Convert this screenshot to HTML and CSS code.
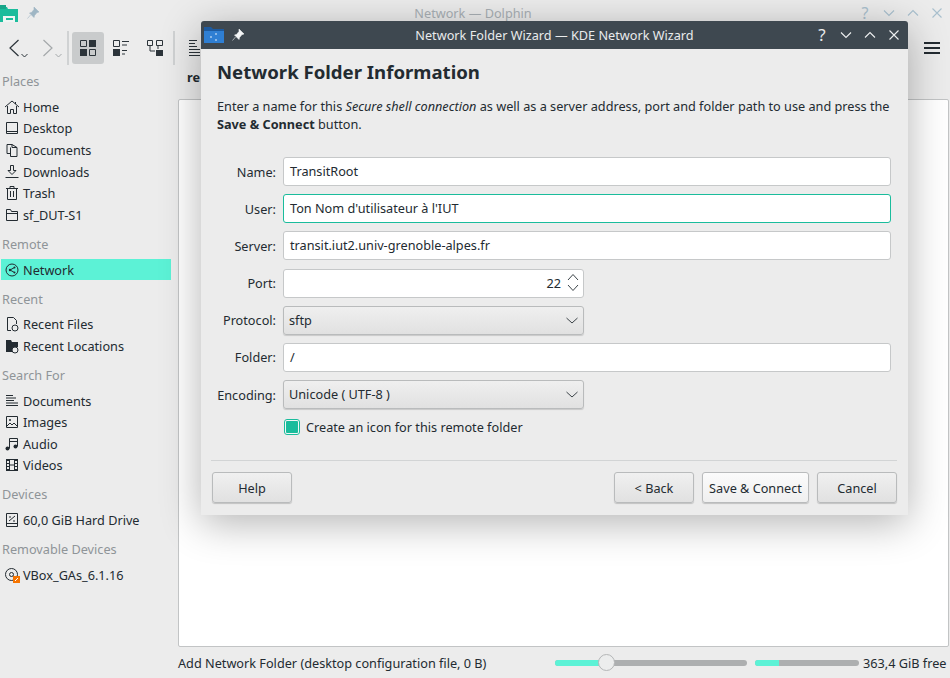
FILE: index.html
```html
<!DOCTYPE html>
<html lang="en">
<head>
<meta charset="utf-8">
<title>Network — Dolphin</title>
<link rel="stylesheet" href="styles.css">
</head>
<body>
<div class="desk">
  <div class="main">
    <header class="titlebar">
      <span class="app-logo"><svg width="18" height="17" viewBox="0 0 18 17"><path d="M0 2h7l1 2h10v13H0z" fill="#1abc9c"/><path d="M0 0h6v4H0z" fill="#17a589"/><path d="M3 11h12v6H3z" fill="#eef5f3"/><path d="M6 13h7v2H6z" fill="#1abc9c"/></svg></span>
      <svg class="pin-faded" width="12" height="12" viewBox="0 0 12 12"><path d="M7 0l5 5-2 .5-2.500 3-.5 2L2.500 6l2-.5 2.500-3zM3.500 8L.5 11.500" fill="#9fb6c4" stroke="#9fb6c4" stroke-width=".6"/></svg>
      <span class="main-title">Network — Dolphin</span>
      <span class="win-btns">
        <span class="faded-q">?</span>
        <svg width="12" height="12" viewBox="0 0 12 12"><path d="M1 3.500l5 5 5-5" class="wb"/></svg>
        <svg width="12" height="12" viewBox="0 0 12 12"><path d="M1 8.500l5-5 5 5" class="wb"/></svg>
        <svg width="12" height="12" viewBox="0 0 12 12"><path d="M1.500 1.500l9 9m0-9l-9 9" class="wb"/></svg>
      </span>
    </header>
    <div class="toolbar">
      <span class="nav"><svg width="10" height="18" viewBox="0 0 10 18"><path d="M9.500 1L1 9l8.500 8" fill="none" stroke="#2c343a" stroke-width="1.200"/></svg><svg class="mini" width="7" height="5" viewBox="0 0 7 5"><path d="M.5 1l3 3 3-3" fill="none" stroke="#2c343a"/></svg></span>
      <span class="nav nav-off"><svg width="10" height="18" viewBox="0 0 10 18"><path d="M.5 1L9 9l-8.500 8" fill="none" stroke="#a4a8aa" stroke-width="1.200"/></svg><svg class="mini" width="7" height="5" viewBox="0 0 7 5"><path d="M.5 1l3 3 3-3" fill="none" stroke="#a4a8aa"/></svg></span>
      <span class="tsep sep-a"></span>
      <span class="tbtn active"><svg width="16" height="16" viewBox="0 0 16 16"><path d="M.5.5h6v6h-6z" fill="none" stroke="#2c343a"/><path d="M9 0h7v7H9zM0 9h7v7H0z" fill="#2c343a"/><path d="M9.500 9.500h6v6h-6z" fill="none" stroke="#2c343a"/></svg></span>
      <span class="tbtn"><svg width="16" height="16" viewBox="0 0 16 16"><path d="M.5.5h6v6h-6zM9 1.500h7M9 5h5M9 10.500h5M9 14h3" fill="none" stroke="#2c343a"/><path d="M0 9h7v7H0z" fill="#2c343a"/></svg></span>
      <span class="tbtn"><svg width="16" height="16" viewBox="0 0 16 16"><path d="M.5.500h5v5h-5zM9.500.500h6v5h-6zM3 6v5h5M11 6v3" fill="none" stroke="#2c343a"/><path d="M9 10h7v6H9z" fill="#2c343a"/></svg></span>
      <span class="tsep sep-b"></span>
      <span class="tbtn-narrow"><svg width="12" height="16" viewBox="0 0 12 16"><path d="M0 .500h8M0 3.500h6M0 6.500h8M0 9.500h11M0 12.500h11M0 15.500h11" stroke="#2c343a" fill="none"/></svg></span>
      <span class="spacer"></span>
      <span class="burger"><i></i><i></i><i></i></span>
    </div>
    <div class="body">
      <aside class="side">
        <h4 class="first">Places</h4>
        <ul>
          <li><svg viewBox="0 0 16 16"><path d="M1 8l7-6 7 6M3.500 7v7.500h3v-4h3v4h3V7M11.500 3v2" class="ic"/></svg>Home</li>
          <li><svg viewBox="0 0 16 16"><path d="M2.500 2.500h11v11h-11zM2.500 11.500h11" class="ic"/></svg>Desktop</li>
          <li><svg viewBox="0 0 16 16"><path d="M3 2.500h5v3h5v9H6.500V5.500M3 2.500v9h3.500M8 2.500l5 3" class="ic"/></svg>Documents</li>
          <li><svg viewBox="0 0 16 16"><path d="M6.500 1.500v5H4L8 10.500l4-4H9.500v-5zM1.500 13.500h13" class="ic"/></svg>Downloads</li>
          <li><svg viewBox="0 0 16 16"><path d="M2 3.500h12M6 3.500v-2h4v2M3.500 3.500v11h9v-11M6.500 6v6M9.500 6v6" class="ic"/></svg>Trash</li>
          <li><svg viewBox="0 0 16 16"><path d="M2.500 2.500h4l1 2h6v9h-11zM2.500 6.500h11" class="ic"/></svg>sf_DUT-S1</li>
        </ul>
        <h4>Remote</h4>
        <ul>
          <li class="sel"><svg viewBox="0 0 16 16"><circle cx="8" cy="8" r="6" class="ic"/><path d="M10.500 5.500L6 8l4.500 2.500" class="ic"/><circle cx="6" cy="8" r="1.200" fill="#232b31"/><circle cx="10.500" cy="5.500" r="1" fill="#232b31"/><circle cx="10.500" cy="10.500" r="1" fill="#232b31"/></svg>Network</li>
        </ul>
        <h4>Recent</h4>
        <ul>
          <li><svg viewBox="0 0 16 16"><path d="M7 14.500H3.500v-13h6l3 3V8" class="ic"/><circle cx="11" cy="12" r="3" class="ic"/></svg>Recent Files</li>
          <li><svg viewBox="0 0 16 16"><path d="M2 2h5l1 2h6v5H9v5H2z" fill="#232b31"/><circle cx="11" cy="12" r="3" fill="#ececec" stroke="#232b31"/></svg>Recent Locations</li>
        </ul>
        <h4>Search For</h4>
        <ul>
          <li><svg viewBox="0 0 16 16"><path d="M2 2.500h7M2 5h10M2 7.500h8M2 10h12M2 12.500h12" class="ic"/></svg>Documents</li>
          <li><svg viewBox="0 0 16 16"><path d="M2.500 2.500h11v11h-11zM3 12l3-3 2 2 2-2 3 3" class="ic"/><circle cx="6" cy="6" r="1" fill="#232b31"/></svg>Images</li>
          <li><svg viewBox="0 0 16 16"><path d="M5.500 12.500v-10h8v8M5.500 5.500h8" class="ic"/><circle cx="3.500" cy="12.500" r="2" fill="#232b31"/><circle cx="11.500" cy="10.500" r="2" fill="#232b31"/></svg>Audio</li>
          <li><svg viewBox="0 0 16 16"><path d="M2.500 2.500h11v11h-11zM5.500 2.500v11M10.500 2.500v11M5.500 8h5" class="ic"/><path d="M2 2h4v12H2zM10 2h4v12h-4z" fill="#232b31"/><path d="M3 4h2v2H3zM3 7h2v2H3zM3 10h2v2H3zM11 4h2v2h-2zM11 7h2v2h-2zM11 10h2v2h-2z" fill="#ececec"/></svg>Videos</li>
        </ul>
        <h4>Devices</h4>
        <ul>
          <li><svg viewBox="0 0 16 16"><path d="M2.500 1.500h11v13h-11zM2.500 11.500h11M5 9l6-5M5 5h2M9 9h2" class="ic"/></svg>60,0 GiB Hard Drive</li>
        </ul>
        <h4>Removable Devices</h4>
        <ul>
          <li><svg viewBox="0 0 16 16"><circle cx="7.500" cy="7.500" r="6" class="ic"/><circle cx="7.500" cy="7.500" r="2" class="ic"/><path d="M9 9h7v7H9z" fill="#f67400"/><path d="M11 14l3-3" stroke="#fff"/></svg>VBox_GAs_6.1.16</li>
        </ul>
      </aside>
      <div class="content-col">
        <div class="crumb">re</div>
        <div class="view"></div>
        <div class="status">
          <span class="status-text">Add Network Folder (desktop configuration file, 0 B)</span>
          <span class="zoom-slider"><span class="zoom-fill"></span><span class="knob"></span></span>
          <span class="disk"><span class="disk-fill"></span></span>
          <span class="free">363,4 GiB free</span>
        </div>
      </div>
    </div>
  </div>

  <section class="dialog">
    <header class="dlg-title">
      <svg class="dlg-folder" width="20" height="16" viewBox="0 0 20 16"><path d="M0 0h7l2 2h11v14H0z" fill="#1d5a9e"/><path d="M0 4h20v12H0z" fill="#2f7fd3"/><circle cx="7" cy="10" r=".8" fill="#fff"/><circle cx="12" cy="7" r=".8" fill="#fff"/><circle cx="12" cy="13" r=".8" fill="#fff"/></svg>
      <svg class="dlg-pin" width="12" height="12" viewBox="0 0 12 12"><path d="M7 0l5 5-2 .5-2.500 3-.5 2L2.500 6l2-.5 2.500-3zM3.500 8L.5 11.500" fill="#f4f6f7" stroke="#f4f6f7" stroke-width=".6"/></svg>
      <span class="dlg-caption">Network Folder Wizard — KDE Network Wizard</span>
      <span class="dlg-btns">
        <span class="dlg-q">?</span>
        <svg width="12" height="12" viewBox="0 0 12 12"><path d="M1 3.500l5 5 5-5" class="wd"/></svg>
        <svg width="12" height="12" viewBox="0 0 12 12"><path d="M1 8.500l5-5 5 5" class="wd"/></svg>
        <svg width="12" height="12" viewBox="0 0 12 12"><path d="M1.500 1.500l9 9m0-9l-9 9" class="wd"/></svg>
      </span>
    </header>
    <div class="dlg-body">
      <h1>Network Folder Information</h1>
      <p class="intro">Enter a name for this <em>Secure shell connection</em> as well as a server address, port and folder path to use and press the <strong>Save &amp; Connect</strong> button.</p>
      <div class="form">
        <label>Name:</label><div class="field">TransitRoot</div>
        <label>User:</label><div class="field focus">Ton Nom d'utilisateur à l'IUT</div>
        <label>Server:</label><div class="field">transit.iut2.univ-grenoble-alpes.fr</div>
        <label>Port:</label>
        <div class="field short num">22<span class="spin"><svg width="12" height="8" viewBox="0 0 12 8"><path d="M1 7l5-5.500L11 7" class="sp"/></svg><svg width="12" height="8" viewBox="0 0 12 8"><path d="M1 1l5 5.500L11 1" class="sp"/></svg></span></div>
        <label>Protocol:</label>
        <div class="combo">sftp<svg width="12" height="7" viewBox="0 0 12 7"><path d="M.5 1L6 6l5.500-5" class="sp"/></svg></div>
        <label>Folder:</label><div class="field">/</div>
        <label>Encoding:</label>
        <div class="combo">Unicode ( UTF-8 )<svg width="12" height="7" viewBox="0 0 12 7"><path d="M.5 1L6 6l5.500-5" class="sp"/></svg></div>
        <span class="blank"></span>
        <div class="check"><span class="box"><i></i></span>Create an icon for this remote folder</div>
      </div>
      <div class="rule"></div>
      <div class="buttons">
        <button class="btn help">Help</button>
        <span class="spacer"></span>
        <button class="btn">&lt; Back</button>
        <button class="btn primary">Save &amp; Connect</button>
        <button class="btn">Cancel</button>
      </div>
    </div>
  </section>
</div>
</body>
</html>
```
FILE: styles.css
```css
* { box-sizing: border-box; }
html, body { margin: 0; padding: 0; }
body { width: 950px; height: 678px; overflow: hidden; background: #ececec; font-family: "Noto Sans", sans-serif; font-size: 12.700px; color: #232b31; }
.desk { position: relative; width: 950px; height: 678px; overflow: hidden; }
.main { width: 950px; height: 678px; display: flex; flex-direction: column; background: #ececec; }
.titlebar { height: 26px; flex: none; display: flex; align-items: center; position: relative; }
.app-logo { display: block; width: 18px; height: 17px; }
.pin-faded { margin-left: 9px; }
.main-title { position: absolute; left: 0; width: 946px; text-align: center; color: #a9b0b5; top: 4px; }
.win-btns { margin-left: auto; display: flex; align-items: center; gap: 12px; padding-right: 7px; }
.faded-q { color: #a9c0ce; font-size: 16px; line-height: 16px; width: 12px; text-align: center; }
.wb { fill: none; stroke: #a9c0ce; stroke-width: 1.1; }
.toolbar { height: 40px; flex: none; display: flex; align-items: center; padding-top: 3px; }
.nav { display: flex; align-items: flex-end; height: 32px; padding-bottom: 7px; margin-left: 9px; width: 18px; flex: none; gap: 2px; }
.nav-off { margin-left: 16px; }
.nav .mini { margin-bottom: -1px; flex: none; }
.nav svg { flex: none; }
.tsep { width: 2px; height: 34px; background: #d0d2d3; flex: none; }
.sep-a { margin-left: 6px; }
.sep-b { margin-left: 2px; }
.tbtn { width: 32px; height: 32px; display: flex; align-items: center; justify-content: center; border-radius: 3px; margin-left: 2px; flex: none; }
.tbtn.active { background: #c9cbcc; margin-left: 3px; margin-right: -1px; }
.tbtn-narrow { margin-left: 14px; display: flex; }
.spacer { flex: 1; }
.burger { display: flex; flex-direction: column; gap: 3px; width: 16px; margin-right: 10px; }
.burger i { display: block; height: 2px; background: #232b31; }
.body { flex: 1; display: flex; min-height: 0; }
.side { width: 178px; flex: none; padding-left: 1px; }
.side h4 { margin: 0; font-weight: 400; font-size: 12.700px; line-height: 18px; color: #8f9498; padding: 9.200px 0 5.700px 1px; height: 33.200px; }
.side h4.first { padding: 6px 0 5.700px 1px; height: 30px; }
.side ul { list-style: none; margin: 0; padding: 0; width: 170px; }
.side li { height: 21.600px; display: flex; align-items: center; gap: 3px; padding-left: 3px; line-height: 18px; color: #232b31; white-space: nowrap; }
.side li svg { width: 16px; height: 16px; flex: none; }
.ic { fill: none; stroke: #232b31; stroke-width: 1; }
.side li.sel { background: #5cf2d6; }
.content-col { flex: 1; display: flex; flex-direction: column; min-width: 0; }
.crumb { height: 33px; font-weight: 700; padding: 2px 0 0 9px; flex: none; }
.view { flex: 1; background: #fff; border: 1px solid #c2c4c5; border-radius: 2px; margin-right: 1px; }
.status { height: 31px; flex: none; display: flex; align-items: center; white-space: nowrap; }
.status-text { width: 377px; flex: none; }
.zoom-slider { position: relative; width: 192px; height: 6px; border-radius: 3px; background: #adafb0; margin-right: 8px; flex: none; }
.zoom-fill { position: absolute; left: 0; top: 0; bottom: 0; width: 50px; border-radius: 3px 0 0 3px; background: #5cf2d6; }
.knob { position: absolute; left: 43px; top: -6px; width: 17px; height: 17px; border-radius: 50%; background: #eceded; border: 1px solid #b4b6b7; }
.disk { position: relative; width: 104px; height: 6px; border-radius: 3px; background: #adafb0; overflow: hidden; margin-right: 4px; flex: none; }
.disk-fill { display: block; width: 24px; height: 6px; background: #5cf2d6; }
.free { color: #232b31; }

.dialog { position: absolute; left: 201px; top: 21px; width: 707px; height: 494px; background: #ececec; border-radius: 3px 3px 0 0; box-shadow: 0 8px 40px rgba(0, 0, 0, .3); display: flex; flex-direction: column; }
.dlg-title { height: 28px; flex: none; background: #3e4850; border-radius: 3px 3px 0 0; display: flex; align-items: center; position: relative; color: #e9ebec; }
.dlg-folder { margin-left: 3px; }
.dlg-pin { margin-left: 8px; }
.dlg-caption { position: absolute; left: 0; width: 100%; text-align: center; top: 5px; }
.dlg-btns { margin-left: auto; display: flex; align-items: center; gap: 12px; padding-right: 8px; }
.dlg-q { font-size: 17px; line-height: 18px; width: 12px; text-align: center; color: #e9ebec; }
.wd { fill: none; stroke: #eef0f1; stroke-width: 1.1; }
.dlg-body { flex: 1; padding: 0 11px 0 10px; display: flex; flex-direction: column; }
.dlg-body h1 { margin: 9px 0 0 6px; font-size: 18.600px; font-weight: 700; line-height: 27px; color: #232b31; }
.intro { margin: 12px 0 0 6px; line-height: 18px; width: 683px; color: #232b31; }
.form { display: grid; grid-template-columns: 65px 608px; column-gap: 7px; row-gap: 8.200px; margin-top: 24px; align-items: center; }
.form label { text-align: right; line-height: 18px; color: #232b31; }
.field { height: 29px; background: #fff; border: 1px solid #c6c8c9; border-radius: 3px; padding: 0 6px; line-height: 27px; white-space: nowrap; }
.field.focus { border-color: #1abc9c; }
.field.short { width: 301px; }
.num { position: relative; text-align: right; padding-right: 22px; }
.spin { position: absolute; right: 4px; top: 3px; display: flex; flex-direction: column; gap: 3px; }
.spin svg { display: block; }
.sp { fill: none; stroke: #3c4449; stroke-width: 1; }
.combo { width: 301px; height: 29px; border: 1px solid #b9bbbc; border-radius: 3px; background: linear-gradient(#efefef, #e1e1e1); box-shadow: 0 1px 1px rgba(0,0,0,.15); padding: 0 5px; line-height: 27px; display: flex; align-items: center; justify-content: space-between; }
.check { display: flex; align-items: center; gap: 6px; height: 18px; margin-left: 1px; margin-top: 1px; color: #232b31; }
.box { width: 16px; height: 16px; border: 1px solid #1abc9c; border-radius: 3px; background: #f4f6f6; display: flex; align-items: center; justify-content: center; }
.box i { display: block; width: 12px; height: 12px; background: #1abc9c; border-radius: 1px; }
.rule { height: 1px; background: #d2d4d5; margin-top: 24px; flex: none; }
.buttons { display: flex; gap: 8px; margin-top: 11px; }
.btn { height: 31px; width: 80px; font: inherit; color: #232b31; padding: 0; border: 1px solid #b9bbbc; border-radius: 3px; background: linear-gradient(#f0f0f0, #e1e1e1); box-shadow: 0 1px 1px rgba(0,0,0,.18); }
.btn.help { margin-left: 1px; }
.btn.primary { width: 107px; background: linear-gradient(#fbfbfb, #efefef); }
```
